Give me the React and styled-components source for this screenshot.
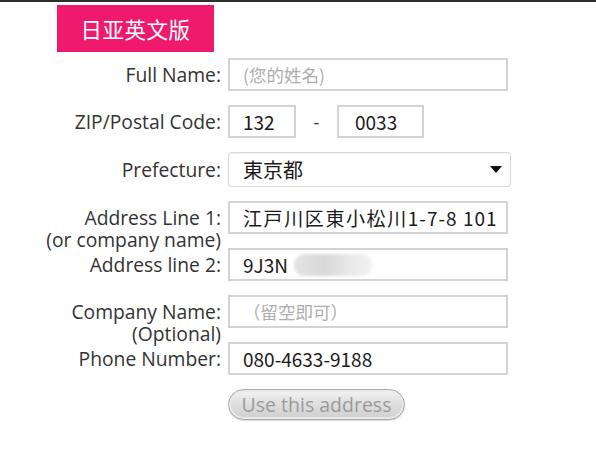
import React from "react";
import styled, { createGlobalStyle } from "styled-components";

const GlobalStyle = createGlobalStyle`
  html, body {
    margin: 0;
    padding: 0;
    background: #ffffff;
  }
`;

const Page = styled.div`
  width: 596px;
  height: 449px;
  border-top: 2px solid #2e2e2e;
  box-sizing: border-box;
  overflow: hidden;
  font-family: "Open Sans", "Noto Sans", sans-serif;
`;

const LangTab = styled.div`
  margin: 3px 0 0 57px;
  width: 157px;
  height: 47px;
  background: #ef1a6d;
  color: #ffffff;
  font-family: "Noto Sans CJK SC", sans-serif;
  font-size: 21.5px;
  display: flex;
  align-items: center;
  justify-content: center;
  letter-spacing: 0.5px;
`;

const Form = styled.div`
  margin-top: 6px;
  display: grid;
  grid-template-columns: 221px 1fr;
  column-gap: 7px;
  row-gap: 14px;
  align-items: center;
`;

const Label = styled.div`
  text-align: right;
  font-size: 19.3px;
  color: #333333;
  line-height: ${(p) => (p.$two ? "22px" : "23px")};
  align-self: ${(p) => (p.$two ? "start" : "center")};
  height: ${(p) => (p.$two ? "33px" : "auto")};
  padding-top: ${(p) => (p.$two ? "6px" : "0")};
  box-sizing: border-box;
  white-space: nowrap;
`;

const Field = styled.div`
  width: ${(p) => p.$w || 280}px;
  height: 33px;
  box-sizing: border-box;
  border: 2px solid #d3d3d3;
  padding-left: ${(p) => p.$pad || 13}px;
  display: flex;
  align-items: center;
  font-family: "Noto Sans CJK JP", sans-serif;
  font-size: 19px;
  color: #1a1a1a;
  white-space: nowrap;
  overflow: hidden;
`;

const Spaced = styled.span`
  letter-spacing: ${(p) => p.$ls}px;
`;

const Placeholder = styled.span`
  color: #aeaeae;
  font-size: 17.5px;
`;

const Blur = styled.span`
  display: inline-block;
  width: 78px;
  height: 22px;
  margin-left: 6px;
  border-radius: 11px;
  background: linear-gradient(90deg, #e3e3e3 0%, #d8d8d8 40%, #e8e8e8 70%, #f2f2f2 100%);
  filter: blur(1.5px);
`;

const Dot = styled.span`
  display: inline-block;
  width: 2px;
  height: 2px;
  background: #5a5ad0;
  margin: 14px 0 0 -16px;
`;

const ZipRow = styled.div`
  display: flex;
  align-items: center;
`;

const Dash = styled.span`
  width: 41px;
  text-align: center;
  font-size: 18px;
  color: #333;
`;

const Select = styled.div`
  width: 283px;
  height: 35px;
  box-sizing: border-box;
  border: 1px solid #d8d8d8;
  border-radius: 3px;
  box-shadow: inset 0 1px 2px rgba(0, 0, 0, 0.06);
  padding: 0 8px 0 14px;
  display: flex;
  align-items: center;
  justify-content: space-between;
  font-family: "Noto Sans CJK JP", sans-serif;
  font-size: 20px;
  color: #1a1a1a;
`;

const Arrow = styled.span`
  width: 0;
  height: 0;
  border-left: 6px solid transparent;
  border-right: 6px solid transparent;
  border-top: 7px solid #111;
`;

const Button = styled.button`
  width: 177px;
  height: 31px;
  border-radius: 16px;
  border: 1px solid #a9a9a9;
  background: linear-gradient(#f3f3f3 0%, #dedede 50%, #cfcfcf 100%);
  box-shadow: inset 0 0 0 2px #e9e9e9, 0 1px 1px rgba(0, 0, 0, 0.15);
  color: #9a9a9a;
  font-family: "Open Sans", sans-serif;
  font-size: 19.5px;
  padding: 0;
  line-height: 29px;
`;

export default function App() {
  return (
    <Page>
      <GlobalStyle />
      <LangTab>日亚英文版</LangTab>
      <Form>
        <Label>Full Name:</Label>
        <Field>
          <Placeholder>(您的姓名)</Placeholder>
        </Field>

        <Label>ZIP/Postal Code:</Label>
        <ZipRow>
          <Field $w={68}>132</Field>
          <Dash>-</Dash>
          <Field $w={87} $pad={16}>0033</Field>
        </ZipRow>

        <Label>Prefecture:</Label>
        <Select>
          <span>東京都</span>
          <Arrow />
        </Select>

        <Label $two>
          Address Line 1:
          <br />
          (or company name)
        </Label>
        <Field>
          <Spaced $ls={1.6}>江戸川区東小松川</Spaced>
          <Spaced $ls={1}>1-7-8&nbsp;101</Spaced>
        </Field>

        <Label>Address line 2:</Label>
        <Field>
          9J3N
          <Blur />
          <Dot />
        </Field>

        <Label $two>
          Company Name:
          <br />
          (Optional)
        </Label>
        <Field>
          <Placeholder>（留空即可）</Placeholder>
        </Field>

        <Label>Phone Number:</Label>
        <Field>080-4633-9188</Field>

        <div />
        <div>
          <Button>Use this address</Button>
        </div>
      </Form>
    </Page>
  );
}
